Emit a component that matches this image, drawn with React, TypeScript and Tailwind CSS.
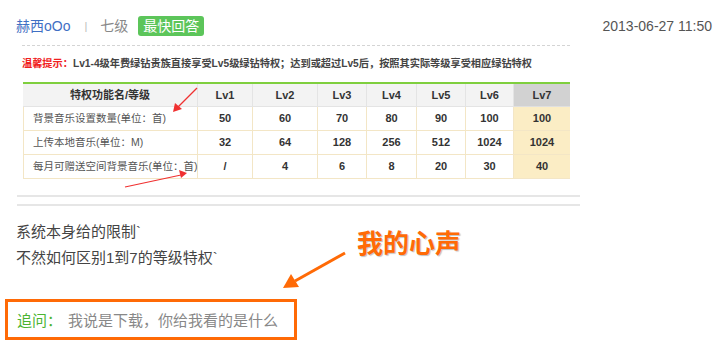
import React from "react";

const F = "font-['Liberation_Sans','Noto_Sans_CJK_SC',sans-serif]";

const cols = [
  { label: "Lv1", w: "w-[55px]", v: ["50", "32", "/"] },
  { label: "Lv2", w: "w-[65px]", v: ["60", "64", "4"] },
  { label: "Lv3", w: "w-[49px]", v: ["70", "128", "6"] },
  { label: "Lv4", w: "w-[50px]", v: ["80", "256", "8"] },
  { label: "Lv5", w: "w-[49px]", v: ["90", "512", "20"] },
  { label: "Lv6", w: "w-[48px]", v: ["100", "1024", "30"] },
];
const lv7 = ["100", "1024", "40"];
const rows = ["背景音乐设置数量(单位：首)", "上传本地音乐(单位：M)", "每月可赠送空间背景音乐(单位：首)"];

export default function App() {
  return (
    <div className={`relative w-[720px] h-[341px] overflow-hidden bg-white ${F}`}>
      {/* header */}
      <div className="flex items-center h-[20px] mt-[16px] pl-[16px] pr-[8px]">
        <span className="text-[14px] text-[#3f6fc4] leading-[20px]">赫西oOo</span>
        <span className="ml-[14px] text-[11px] text-[#bbb]">|</span>
        <span className="ml-[13px] text-[14px] text-[#888] leading-[20px]">七级</span>
        <span className="ml-[10px] h-[20px] w-[66px] rounded-[3px] bg-[#5cc55a] text-white text-[14px] leading-[20px] text-center">最快回答</span>
        <span className="ml-auto text-[14px] text-[#555] leading-[20px]">2013-06-27 11:50</span>
      </div>

      {/* quoted image */}
      <div className="ml-[22px] mt-[9px] w-[548px] border-t border-dashed border-[#d4d4d4]" />
      <div className="ml-[22px] mt-[11px] h-[14px] text-[10.2px] leading-[14px] font-bold text-[#444] whitespace-nowrap">
        <span className="text-[#f02020]">温馨提示：</span>Lv1-4级年费绿钻贵族直接享受Lv5级绿钻特权；达到或超过Lv5后，按照其实际等级享受相应绿钻特权
      </div>
      <div className="ml-[23px] mt-[11px] w-[547px] border-t-2 border-[#7fcf3e] text-[11px] text-[#333]">
        <div className="flex h-[23px] bg-[#f3f3f3] font-bold">
          <div className="w-[175px] flex items-center justify-center border-r border-b border-[#e4e4e4]">特权功能名/等级</div>
          {cols.map((c) => (
            <div key={c.label} className={`${c.w} flex items-center justify-center border-r border-b border-[#e4e4e4]`}>{c.label}</div>
          ))}
          <div className="flex-1 flex items-center justify-center bg-[#d2d2d2] border-b border-[#e0e0e0]">Lv7</div>
        </div>
        {rows.map((r, i) => (
          <div key={r} className="flex h-[24px] border-b border-l border-[#f3e6c6]">
            <div className="w-[174px] flex items-center pl-[9px] border-r border-[#f3e6c6] text-[#555] text-[10.5px] whitespace-nowrap">{r}</div>
            {cols.map((c) => (
              <div key={c.label} className={`${c.w} flex items-center justify-center border-r border-[#f3e6c6] font-bold`}>{c.v[i]}</div>
            ))}
            <div className="flex-1 flex items-center justify-center bg-[#fbedc5] font-bold">{lv7[i]}</div>
          </div>
        ))}
      </div>
      <div className="ml-[17px] mt-[16px] w-[563px] h-[2px] bg-[#e6e6e6]" />
      <div className="ml-[17px] mt-[7px] w-[563px] h-[2px] bg-[#e6e6e6]" />

      {/* answer */}
      <div className="ml-[16px] mt-[13px] text-[15px] leading-[26px] text-[#444]">
        <div>系统本身给的限制`</div>
        <div>不然如何区别1到7的等级特权`</div>
      </div>

      <div className="ml-[5px] mt-[28px] w-[292px] h-[41px] border-[3px] border-[#ff6a06] flex items-center pl-[9px] pt-[4px] text-[15px]">
        <span className="text-[#4bb431]">追问：</span>
        <span className="ml-[6px] text-[#888]">我说是下载，你给我看的是什么</span>
      </div>

      {/* annotations */}
      <div className="absolute left-[357px] top-[229px] text-[26px] leading-[30px] font-bold text-[#ff6a06] [text-shadow:1px_1px_1px_rgba(0,0,0,0.25)]">
        我的心声
      </div>
      <svg className="absolute left-0 top-0" width="720" height="341">
        <line x1="345" y1="253" x2="295" y2="281" stroke="#ff6a06" strokeWidth="3" />
        <polygon points="283,288 291,274 299,287" fill="#ff6a06" />
        <line x1="197" y1="88" x2="178" y2="107" stroke="#f03030" strokeWidth="1.2" />
        <polygon points="173,112 175,103 182,109" fill="#f03030" />
        <line x1="125" y1="187" x2="181" y2="175" stroke="#f03030" strokeWidth="1.2" />
        <polygon points="187,173 179,170 181,178" fill="#f03030" />
      </svg>
    </div>
  );
}
